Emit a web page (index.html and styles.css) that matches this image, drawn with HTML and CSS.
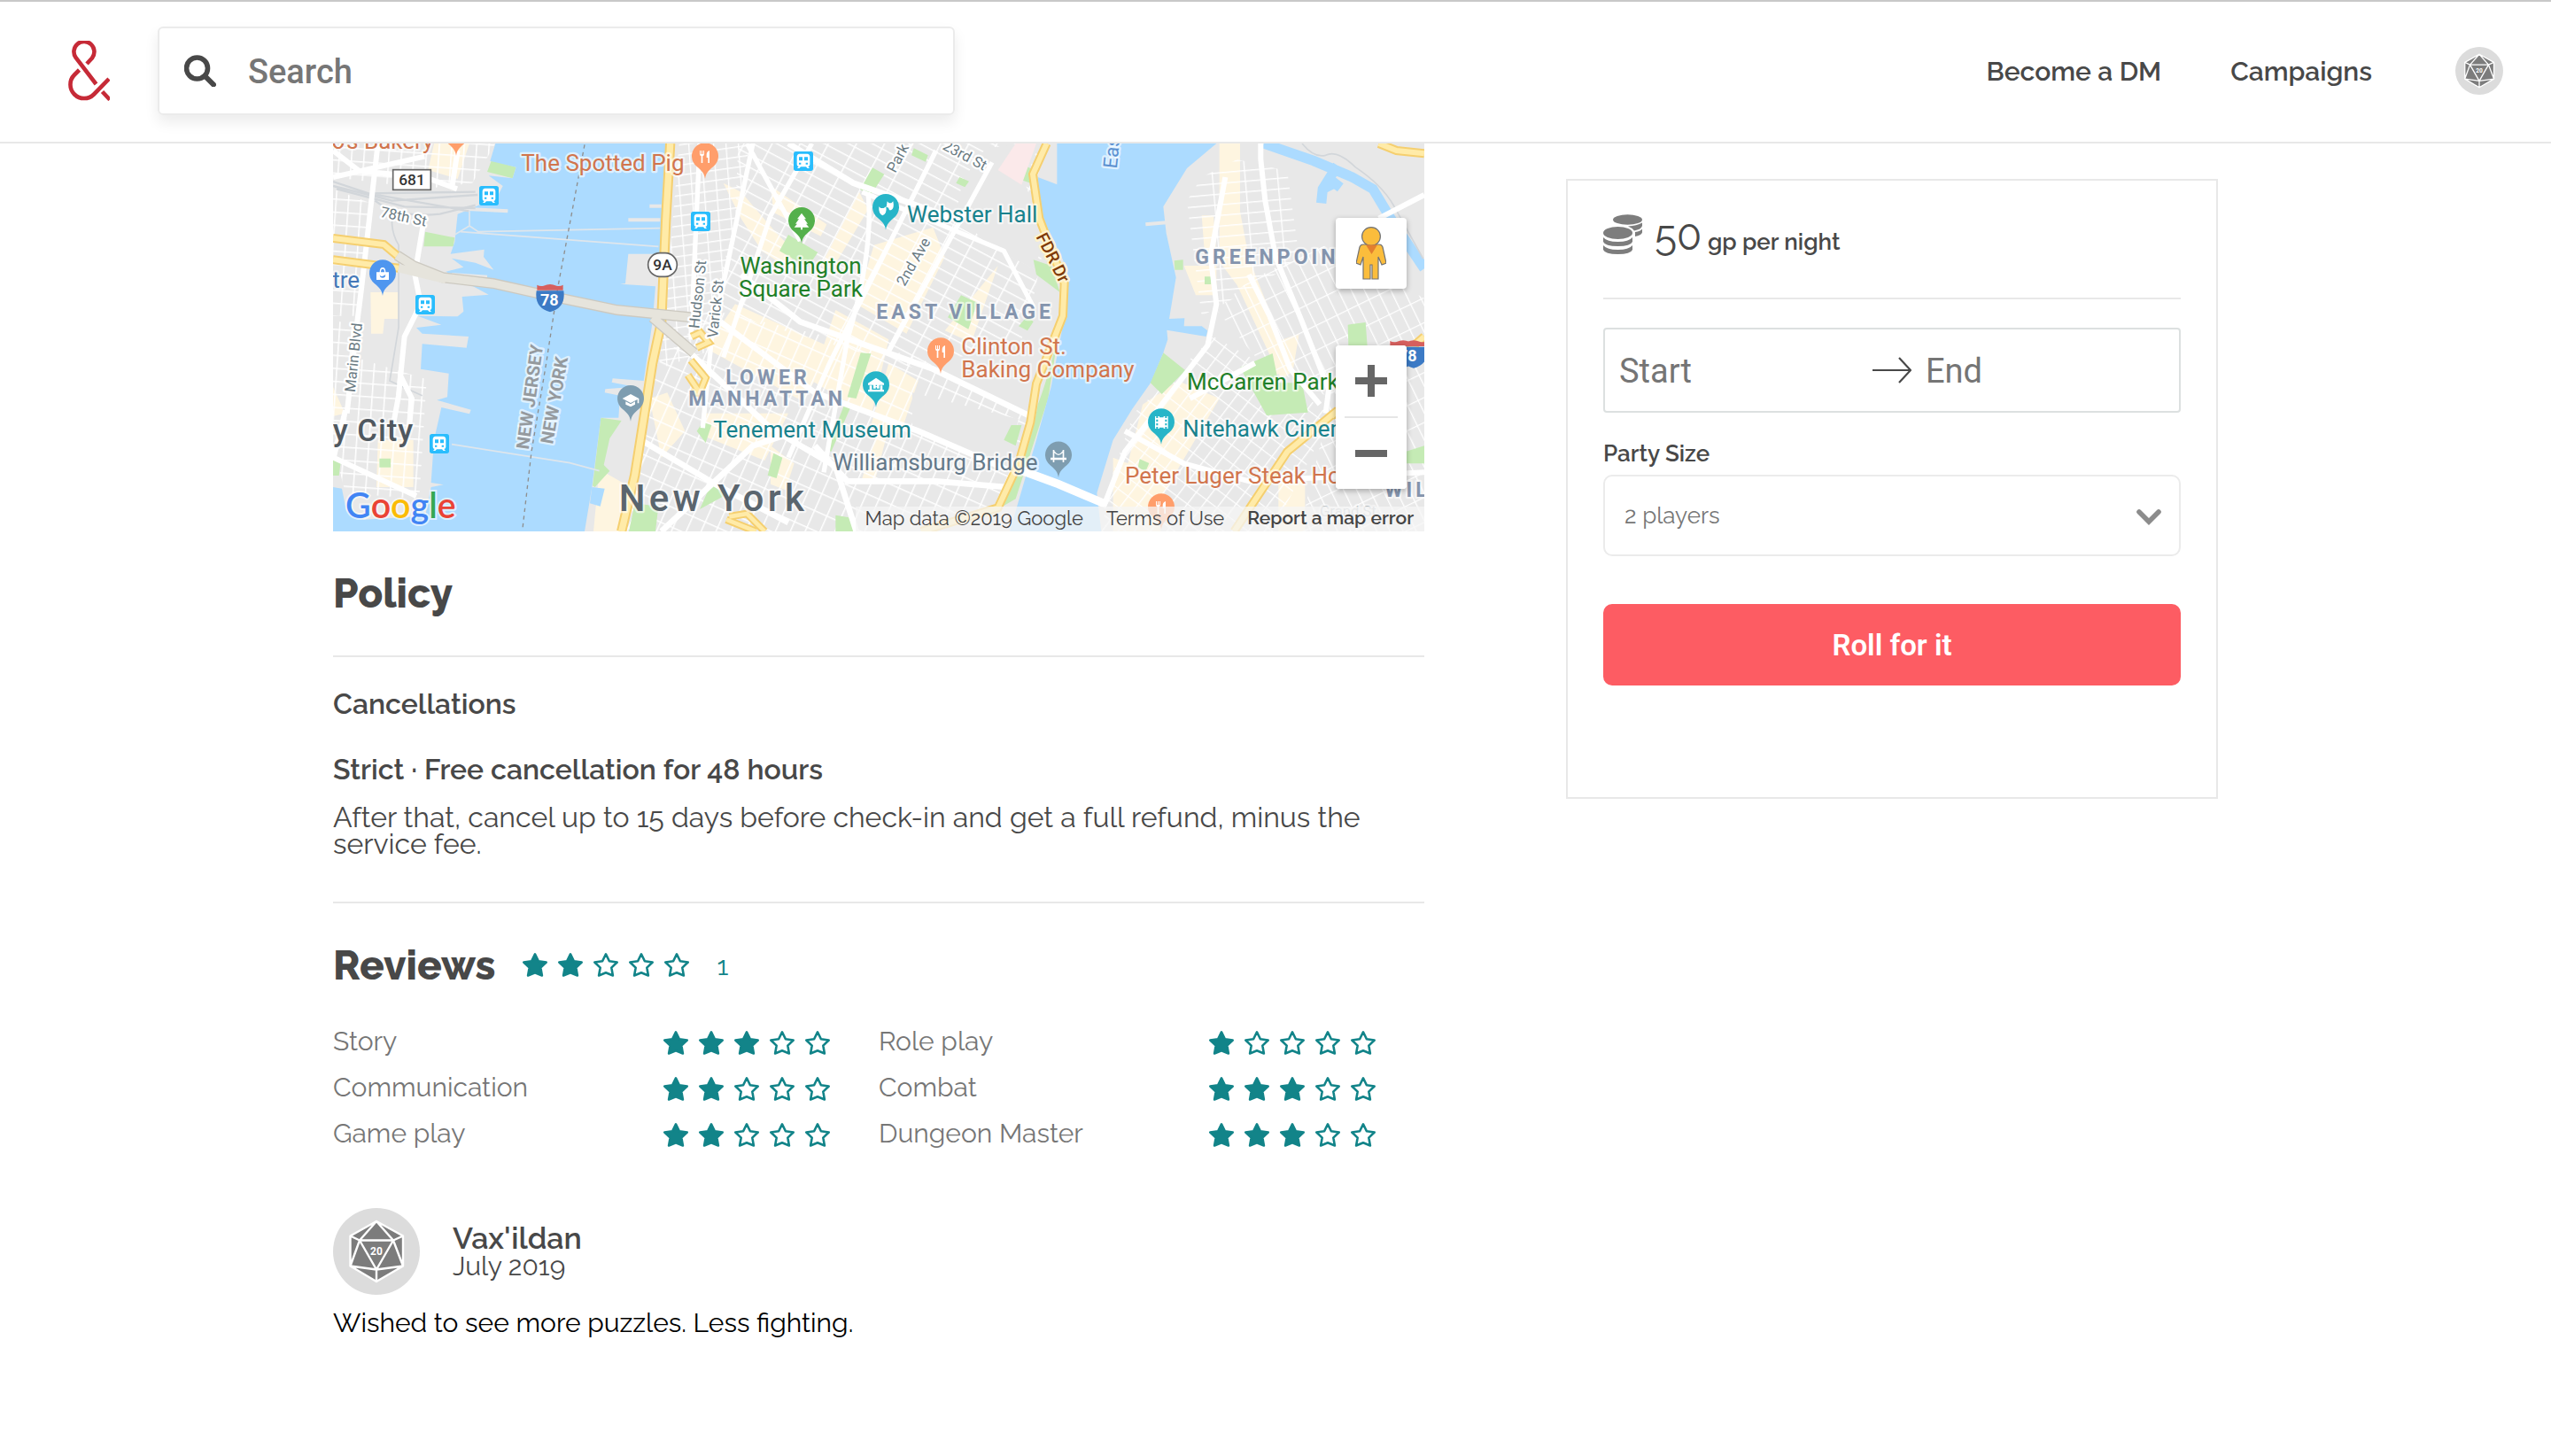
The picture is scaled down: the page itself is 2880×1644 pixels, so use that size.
FILE: index.html
```html
<!DOCTYPE html>
<html lang="en">
<head>
<meta charset="utf-8">
<meta name="viewport" content="width=device-width, initial-scale=1">
<title>Campaign</title>
<link rel="stylesheet" href="styles.css">
</head>
<body>
<svg class="sprite" aria-hidden="true">
  <defs>
    <symbol id="star" viewBox="0 0 30 30"><path d="M15 2.300l3.900 8 8.800 1.200-6.400 6.100 1.600 8.900-7.900-3.300-7.900 3.300 1.600-8.900L2.300 11.500l8.800-1.200z" stroke="currentColor" stroke-width="2.600" stroke-linejoin="round"/></symbol>
    <symbol id="d20" viewBox="0 0 98 98">
      <circle cx="49" cy="49" r="49" fill="#dcdcdc"/>
      <path d="M49 15l30 16.500v34L49 83 19.500 65.500v-34z" fill="#7c7c7c"/>
      <path d="M49 15l30 16.500v34L49 83 19.500 65.500v-34zM49 15L30 36.500h38zM19.500 31.500L30 36.500 19.500 65.500 49 69.500 79 65.500 68 36.500 79 31.500M30 36.500L49 69.500 68 36.500M49 69.500V83" fill="none" stroke="#fff" stroke-width="2.400" stroke-linejoin="round"/>
      <text x="49" y="53" text-anchor="middle" class="d20-number">20</text>
    </symbol>
    <symbol id="pin" viewBox="0 0 100 130" overflow="visible"><path d="M50 124C47 105 40 97 22 82A45 45 0 1 1 78 82C60 97 53 105 50 124z"/></symbol>
    <symbol id="fork" viewBox="0 0 40 46"><path d="M3 2v12q0 6 5 7v23h5V21q5-1 5-7V2h-3v12h-3V2H9v12H6V2zM36 2q-10 3-10 14v10h5v18h5z" fill="#fff"/></symbol>
    <symbol id="transit" viewBox="0 0 66 66">
      <rect width="66" height="66" rx="8" fill="#29bdfd"/>
      <path d="M20 8h26q9 1 9 10v26q0 6-6 7l5 6h-7l-5-5H24l-5 5h-7l5-6q-6-1-6-7V18q0-9 9-10z" fill="#fff"/>
      <path d="M18 19h12v12H18zM36 19h12v12H36zM18 38h7v6h-7zM41 38h7v6h-7z" fill="#29bdfd"/>
    </symbol>
    <symbol id="shield" viewBox="0 0 96 96">
      <path d="M4 3q10 6 22 3 12-5 22-5t22 5q12 3 22-3v18H4z" fill="#d65f5d"/>
      <path d="M2 23h92q8 58-46 72Q-6 81 2 23z" fill="#3c7ac5"/>
    </symbol>
    <pattern id="grid-jersey" width="42" height="44" patternUnits="userSpaceOnUse" patternTransform="rotate(4)"><path d="M0 0H42M0 0V44" stroke="#fff" stroke-width="9"/></pattern>
    <pattern id="grid-west" width="42" height="34" patternUnits="userSpaceOnUse" patternTransform="rotate(-8) skewX(-4)"><path d="M0 0H42M0 0V34" stroke="#fff" stroke-width="8"/></pattern>
    <pattern id="grid-village" width="84" height="38" patternUnits="userSpaceOnUse" patternTransform="rotate(28)"><path d="M0 0H84M0 0V38" stroke="#fff" stroke-width="9"/></pattern>
    <pattern id="grid-lower" width="46" height="62" patternUnits="userSpaceOnUse" patternTransform="rotate(24)"><path d="M0 0H46M0 0V62" stroke="#fff" stroke-width="9"/></pattern>
    <pattern id="grid-green" width="110" height="36" patternUnits="userSpaceOnUse" patternTransform="rotate(-5)"><path d="M0 0H110M0 0V36" stroke="#fff" stroke-width="8"/></pattern>
    <pattern id="grid-east" width="40" height="76" patternUnits="userSpaceOnUse" patternTransform="rotate(-26)"><path d="M0 0H40M0 0V76" stroke="#fff" stroke-width="8"/></pattern>
    <pattern id="grid-burg" width="44" height="50" patternUnits="userSpaceOnUse" patternTransform="rotate(37)"><path d="M0 0H44M0 0V50" stroke="#fff" stroke-width="8"/></pattern>
  </defs>
</svg>

<header class="header">
  <a class="logo" href="#" aria-label="Home">
    <svg viewBox="0 0 46 68"><g fill="none" stroke="#c62a37" stroke-width="4.600"><path d="M21 26L27 19.500A11.500 11.500 0 1 0 8.500 19L31.500 49"/><path d="M12.500 33L7 38.500A15.500 15.500 0 0 0 29 60.500L46 43"/><path d="M38.500 57.500L47 66.500"/></g></svg>
  </a>
  <form class="search" role="search">
    <svg class="search-icon" viewBox="0 0 36 36" aria-hidden="true"><circle cx="14.500" cy="15" r="12" fill="none" stroke="#484848" stroke-width="5.600"/><path d="M24 24.500l9 9" stroke="#484848" stroke-width="6" stroke-linecap="round"/></svg>
    <input class="search-input" type="search" placeholder="Search" aria-label="Search">
  </form>
  <nav class="nav">
    <a href="#">Become a DM</a>
    <a href="#">Campaigns</a>
    <a class="nav-avatar" href="#" aria-label="Profile"><svg viewBox="0 0 98 98"><use href="#d20"/></svg></a>
  </nav>
</header>

<main class="page">
  <div class="details">
    <section class="map" aria-label="Map">
      <svg class="map-canvas" viewBox="18 36 3696 1314">
        <rect x="18" y="36" width="3696" height="1314" fill="#e8e8e8"/>
        <g fill="#fef5e0">
          <path d="M360 36h120l-40 120-100-30zM145 540h95v90h-48l-5 50h-40zM170 1040h120v160H165zM420 1036l40 4-5 16-35-6zM18 860l40 90-40 10z"/>
          <path d="M1340 170l60 30 120 140 60 60-20 60-90-60-70-110zM1500 180l190 130-20 40-160-80zM1800 200l30 60-120 200-40-10zM1850 380l200-60 40 100-130 260-170-100zM2270 450l-90 260-90-40zM1380 580l330 150-100 180-330-180zM1720 600l180 100-60 260-200-120zM1280 950l280 0-80 160-200-80zM1900 780l100 60-60 180-100-30zM1500 1060l80 60-30 90-50-20zM1900 1000l-50 190-40-20 60-180z"/>
          <path d="M1090 900l60-20 60 130-80 90zM920 1140l140 80-60 130H900z"/>
          <path d="M3020 36h70l0 230 30 160 150 380-40 30-150-320-60-80zM2900 450h110v100h-70zM2960 280l40 0 10 130-40 0zM2760 920l120-80 140 60-200 340-110-120zM3180 720l110-40-20 120-60 20zM2660 1100l180 70-20 180h-160zM3220 1180h90v170h-90z"/>
        </g>
        <g fill="none">
          <path d="M18 36H568L490 170 330 190 18 150z" fill="url(#grid-jersey)"/>
          <path d="M18 190L150 240 110 620 18 620z" fill="url(#grid-jersey)"/>
          <path d="M18 640H110L90 760 335 835 310 1240 60 1220 18 1060z" fill="url(#grid-jersey)"/>
          <path d="M1190 36H1430L1290 740 1120 800 1160 400z" fill="url(#grid-west)"/>
          <path d="M1390 36H2400L2430 360 2390 560 2350 700 2000 800 1300 600 1380 300z" fill="url(#grid-village)"/>
          <path d="M1100 800L1300 600 2000 760 2390 970 2300 1270 1900 1350H1000z" fill="url(#grid-lower)"/>
          <path d="M2960 150L3080 90 3250 130 3290 420 3180 500 2960 620 2910 230z" fill="url(#grid-green)"/>
          <path d="M3010 600L3120 500 3370 380 3714 560V1350H3290L3400 900 3160 780z" fill="url(#grid-east)"/>
          <path d="M2730 950L3000 690 3160 780 3400 960 3200 1350H2620L2660 1150z" fill="url(#grid-burg)"/>
        </g>
        <path d="M2150 160l80-110 180-14-50 130 60 170-20 130-170-90-100-110zM1980 880l360 90-50 160-310-120z" fill="#e8e8e8"/>
        <g fill="#c5ebb5">
          <path d="M555 92l83 24-12 38-86-22zM330 335l100 20-5 30h-100zM18 1105l28-4-8 60H18zM175 1103h38v30h-38zM925 965l70 10-40 60-20 90 20 20-50 55-8-5zM1040 1255l80 10-10 85h-90z"/>
          <path d="M1560 345l100 60-35 50-95-55zM1845 118l40 22-45 70-37-18zM1985 52l48 24-8 22-48-22zM2140 150l32 14-14 20-30-14zM2145 550l55 25-30 90-70-40zM1840 748l-50 152-30-5 45-150zM1775 920l-70 160-15-10 60-150zM1510 1085l30 15-20 70-30-10zM1300 1185l60 35-100 55zM2350 990l-20 70-40-20 25-50zM2370 620l20 20-20 30-30-15zM2360 110l40 20-20 40-30-10zM1720 1295l60 10v45h-60zM2390 430l60 20 30 90-80-60zM1250 1010l20-30 30 10-20 60z"/>
          <path d="M2475 680Q2440 830 2405 920 2370 1130 2260 1280L2330 1240 2440 900z"/>
          <path d="M2830 745l75 60-80 80-40-40zM3090 795l110-48 20 100 80 0 20 100-140 10zM2867 433l30-3v34h-28zM2970 487h22v26h-22zM3455 650l60-8 6 80h-64zM2750 1105l32 14-12 28-26-14zM3650 1080l64-20v60h-64z"/>
        </g>
        <path d="M2330 36h70l-50 140-80-50z" fill="#fbe9ea"/>
        <g fill="#acdbff">
          <path d="M568 36L550 95 638 116 626 154 545 145 593 180 575 215 490 255 440 275 430 370 416 410 530 395 528 420 562 464 500 440 420 425 460 455 400 470 545 548 455 555 460 605 440 622 305 620 385 650 300 660 320 680 477 690 470 728 320 715 315 800 410 815 405 895 370 905 485 938 480 952 385 930 360 1040 350 1185 392 1192 350 1200 320 1350H870L895 1200 925 965 985 965 990 890 938 880 940 868 1040 860 962 845 965 832 1070 840 1100 640 1110 520 990 512 1008 510 1018 410 1127 410 1145 36z"/>
          <path d="M18 1200l30 5 15 75 60 30 180-10 20-30 20 80H18zM895 1200l43 5-15 60-35-10z"/>
          <path d="M2470 36V175L2405 150 2415 290 2460 370 2490 430 2510 500 2500 600 2450 860 2400 1040 2310 1350H2620L2605 1220 2660 1040 2725 935 2785 850 2830 745 2845 700 2842 668 2975 690 2980 670 2960 655 2900 655 2902 628 2850 630 2873 490 2840 340 2830 250 2910 120 3010 36z"/>
        </g>
        <path d="M3170 36L3340 95 3470 150 3540 190 3600 290 3714 460M3420 110L3370 190 3365 238M3370 190l40-20 20 15" fill="none" stroke="#acdbff" stroke-width="34"/>
        <path d="M1018 295h108M1090 248h40M410 255l200 10M420 480l120 8M2770 310l70-6" stroke="#e8e8e8" stroke-width="12"/>
        <g fill="none" stroke="#d2d6da" stroke-width="8">
          <path d="M18 165l120 40 340 60M18 180l200 50 290-20M30 190l230 60 240 5M140 205l360-5M160 230q80 60 220 45l120-30" stroke-width="7"/>
          <path d="M220 270q-10 60 20 110v280l-30 180 110 50M3300 36q40 50 80 40 40-20 100 40 90 60 130 130l100 180" stroke-width="5"/>
        </g>
        <g fill="none" stroke="#dfe6ec" stroke-width="5"><path d="M430 345l50-30 30 20 615-12M480 315v-50M450 335l670 50M420 1055L820 1118 920 1145"/></g>
        <g fill="none" stroke="#fff" stroke-width="16">
          <path d="M170 36L115 520 95 680 65 950M18 60l90 70 220 20 110 40M440 60l-20 130M18 150l310-70M325 300l-30 180 20 100-55 110-20 200-20 110M245 820l40 80-10 110M60 940l-40 160 280 130" stroke-width="18"/>
          <path d="M1260 36L1230 700M1440 36L1300 700 1270 1000M1420 36l180 330M1810 200L2290 400 2390 590M2060 60L1700 780 1560 1100M2250 100L1900 740M1830 200Q1850 400 1760 700L1680 1150M1640 36L1500 280 1340 760" stroke-width="16"/>
          <path d="M1400 480L1600 640 2050 800 2380 960M1330 640L1650 880 2000 1010 2300 1140M1200 720L1500 1000 1720 1130 1790 1350M1060 1040L1330 1200 1560 1320M1650 1060L1760 1180H2060L2300 1200M1130 1350L1440 1060 1560 1020M1560 36L1780 170 2150 300" stroke-width="20"/>
          <path d="M3160 36V90L3175 230 3210 420 3300 640 3390 870 3380 950M3040 150L2990 420 3010 580 2980 720 2840 900 2700 1080 2630 1260M3120 480L3190 620 3260 800 3360 920M2700 1010L2900 1120 3120 1180 3714 1150M3714 210L3560 290M3140 780L2920 900" stroke-width="18"/>
        </g>
        <path d="M2340 1140L2475 1190 2640 1260" stroke="#fff" stroke-width="28"/>
        <g fill="none">
          <g stroke="#f5cf6f" stroke-width="34">
            <path d="M1160 36L1145 300 1130 640 1100 780 1040 1160 995 1350"/>
            <path d="M2435 36L2388 140 2410 290 2495 510 2490 620 2400 850 2380 980 2340 1120 2270 1270 2010 1350M3714 70L3620 60 3560 36M3420 940L3250 1080 3190 1170 3070 1350M3400 960L3714 690M18 357L190 378 240 420M18 430L240 458" stroke-width="30"/>
            <path d="M1232 690l30-14 28 34-40 18M1230 770l50 60-20 50-40-60M1230 880l40 0M1360 1300l60-10 60 60M1350 1310l100 40" stroke-width="26"/>
          </g>
          <g stroke="#ffeba8" stroke-width="22">
            <path d="M1160 36L1145 300 1130 640 1100 780 1040 1160 995 1350"/>
            <path d="M2435 36L2388 140 2410 290 2495 510 2490 620 2400 850 2380 980 2340 1120 2270 1270 2010 1350M3714 70L3620 60 3560 36M3420 940L3250 1080 3190 1170 3070 1350M3400 960L3714 690M18 357L190 378 240 420M18 430L240 458" stroke-width="18"/>
            <path d="M1232 690l30-14 28 34-40 18M1230 770l50 60-20 50-40-60M1230 880l40 0M1360 1300l60-10 60 60M1350 1310l100 40" stroke-width="14"/>
          </g>
          <path d="M235 415L290 450 390 490 560 510 740 550 980 600 1230 625M1100 625L1240 745" stroke="#ccc9c0" stroke-width="36"/>
          <path d="M235 415L290 450 390 490 560 510 740 550 980 600 1230 625M1100 625L1240 745M240 458L400 497" stroke="#e6e4dc" stroke-width="28"/>
          <path d="M870 40L780 520 740 780 690 1080 660 1340" stroke="#8f8f8f" stroke-width="4" stroke-dasharray="13 13"/>
        </g>

        <g class="label road">
          <text transform="translate(176 284) rotate(12)">78th St</text>
          <text transform="translate(92 880) rotate(-84)">Marin Blvd</text>
          <text transform="translate(1258 664) rotate(-84)">Hudson St</text>
          <text transform="translate(1320 696) rotate(-84)">Varick St</text>
          <text transform="translate(1922 138) rotate(-62)">Park Ave</text>
          <text transform="translate(2080 54) rotate(28)">23rd St</text>
          <text transform="translate(1954 522) rotate(-60)">2nd Ave</text>
          <text x="3360" y="1300" class="faint">Grand St</text>
        </g>
        <g class="label border-name">
          <text transform="translate(680 1074) rotate(-82)">NEW JERSEY</text>
          <text transform="translate(762 1056) rotate(-80)">NEW YORK</text>
        </g>
        <text class="label fdr" transform="translate(2398 352) rotate(63)">FDR Dr</text>
        <text class="label river" transform="translate(2672 122) rotate(-84)">East River</text>
        <g class="label district">
          <text x="1858" y="631">EAST VILLAGE</text>
          <text x="1348" y="853">LOWER</text>
          <text x="1222" y="924">MANHATTAN</text>
          <text x="2938" y="444">GREENPOINT</text>
          <text x="3580" y="1234">WILLIAMSBURG</text>
        </g>
        <text class="label city" text-anchor="end" x="292" y="1044">Jersey City</text>
        <text class="label metropolis" x="986" y="1280">New York</text>
        <g class="label food">
          <text text-anchor="end" x="358" y="54">Carlo's Bakery</text>
          <text x="655" y="128">The Spotted Pig</text>
          <text x="2146" y="749">Clinton St.</text>
          <text x="2146" y="828">Baking Company</text>
          <text x="2700" y="1187">Peter Luger Steak House</text>
        </g>
        <g class="label park">
          <text x="1602" y="476" text-anchor="middle">Washington</text>
          <text x="1602" y="554" text-anchor="middle">Square Park</text>
          <text x="2910" y="869">McCarren Park</text>
        </g>
        <g class="label culture">
          <text x="1962" y="303">Webster Hall</text>
          <text x="1306" y="1032">Tenement Museum</text>
          <text x="2896" y="1028">Nitehawk Cinema</text>
        </g>
        <text class="label landmark" x="1710" y="1142">Williamsburg Bridge</text>
        <text class="label shop" text-anchor="end" x="108" y="524">Centre</text>

        <g>
          <use href="#pin" x="385" y="-46" width="100" height="130" fill="#ff9e6b"/>
          <use href="#pin" x="1228" y="32" width="100" height="130" fill="#ff9e6b"/><use href="#fork" x="1256" y="58" width="42" height="46"/>
          <use href="#pin" x="2026" y="692" width="100" height="130" fill="#ff9e6b"/><use href="#fork" x="2054" y="718" width="42" height="46"/>
          <use href="#pin" x="2773" y="1220" width="100" height="130" fill="#ff9e6b"/><use href="#fork" x="2801" y="1246" width="42" height="46"/>
          <use href="#pin" x="1555" y="250" width="100" height="130" fill="#54b04b"/>
          <path d="M1605 272l15 20h-6l12 16h-6l10 12h-22v8h-6v-8h-22l10-12h-6l12-16h-6z" fill="#fff"/>
          <use href="#pin" x="1840" y="205" width="100" height="130" fill="#27b5c8"/>
          <path d="M1895 232l6 6h8l6-6q5 24-7 30h-6q-2-12-10-10zM1867 250l6 5h10l8-5q4 24-12 30-14-6-12-30z" fill="#fff"/>
          <use href="#pin" x="1807" y="806" width="100" height="130" fill="#27b5c8"/>
          <path d="M1830 848l27-18 27 18v6h-54zM1835 856h8v14h28v-14h8v14h5v7h-54v-7h5zM1848 853h8v5h4v-5h8v13h-8v-4h-4v4h-8z" fill="#fff"/>
          <use href="#pin" x="2773" y="932" width="100" height="130" fill="#27b5c8"/>
          <path d="M2802 960h4v6h6v-6h5v4h14v-4h5v6h6v-6h4v42h-4v-6h-6v6h-5v-4h-14v4h-5v-6h-6v6h-4zM2806 971v7h6v-7zM2806 984v7h6v-7zM2836 971v7h6v-7zM2836 984v7h6v-7z" fill="#fff" fill-rule="evenodd"/>
          <use href="#pin" x="2425" y="1044" width="100" height="130" fill="#7e9db0"/>
          <path d="M2448 1100h54v8h-8v8h-5v-8h-28v8h-5v-8h-8zM2456 1074h5v26h-5zM2489 1074h5v26h-5zM2461 1078q14 20 28 0v6q-14 16-28 0z" fill="#fff"/>
          <use href="#pin" x="976" y="853" width="100" height="130" fill="#7e9db0"/>
          <path d="M998 900l28-15 28 15v16h-5v-13l-23 12zM1009 910l17 9 15-9v10l-15 8-17-8z" fill="#fff"/>
          <use href="#pin" x="136" y="428" width="100" height="130" fill="#4f96ef"/>
          <path d="M165 472h11q0-16 10-16t10 16h11v26h-42zM180 472h12q0-11-6-11t-6 11zM176 480q4 12 20 0l-2 8q-8 6-16 0z" fill="#fff" fill-rule="evenodd"/>
          <use href="#transit" x="513" y="180" width="66" height="66"/>
          <use href="#transit" x="297" y="549" width="66" height="66"/>
          <use href="#transit" x="345" y="1020" width="66" height="66"/>
          <use href="#transit" x="1230" y="267" width="66" height="66"/>
          <use href="#transit" x="1578" y="63" width="66" height="66"/>
          <use href="#shield" x="705" y="512" width="96" height="96"/><text class="shield-text" x="751" y="586">78</text>
          <use href="#shield" x="3594" y="702" width="96" height="96"/><use href="#shield" x="3630" y="702" width="96" height="96"/><text class="shield-text" x="3658" y="775">78</text>
          <rect x="221" y="125" width="128" height="68" fill="#fff" stroke="#666" stroke-width="5"/><text class="route-text" x="285" y="177">681</text>
          <rect x="1085" y="407" width="98" height="80" rx="40" fill="#fff" stroke="#666" stroke-width="5"/><text class="route-text" x="1134" y="464">9A</text>
        </g>
        <text class="google" x="60" y="1306"><tspan fill="#4285f4">G</tspan><tspan fill="#ea4335">o</tspan><tspan fill="#fbbc05">o</tspan><tspan fill="#4285f4">g</tspan><tspan fill="#34a853">l</tspan><tspan fill="#ea4335">e</tspan></text>
      </svg>
      <button class="map-button pegman" type="button" aria-label="Street View">
        <svg viewBox="0 0 34 60"><g fill="#fbbd3c" stroke="#737373" stroke-width="1.200"><path d="M8 20h18q3 0 4 3l4 18-5 2-4-9v25h-7V43h-2v16H8V34l-3 9-5-2 4-18q1-3 4-3z"/><circle cx="17" cy="11" r="10.400"/></g><path d="M11 20.500h13L17.500 31z" fill="#e37f2e"/></svg>
      </button>
      <div class="map-zoom">
        <button class="map-button" type="button" aria-label="Zoom in"><svg viewBox="0 0 36 36"><path d="M14 0h8v14h14v8H22v14h-8V22H0v-8h14z"/></svg></button>
        <button class="map-button" type="button" aria-label="Zoom out"><svg viewBox="0 0 36 36"><path d="M0 14h36v8H0z"/></svg></button>
      </div>
      <div class="map-legal"><span>Map data ©2019 Google</span><a href="#">Terms of Use</a><a class="report" href="#">Report a map error</a></div>
    </section>

    <section class="policy">
      <h2>Policy</h2>
      <div class="policy-body">
        <h3>Cancellations</h3>
        <h4>Strict · Free cancellation for 48 hours</h4>
        <p>After that, cancel up to 15 days before check-in and get a full refund, minus the service fee.</p>
      </div>
    </section>

    <section class="reviews">
      <div class="reviews-head">
        <h2>Reviews</h2>
        <span class="stars" role="img" aria-label="2 of 5 stars"><svg class="on"><use href="#star"/></svg><svg class="on"><use href="#star"/></svg><svg><use href="#star"/></svg><svg><use href="#star"/></svg><svg><use href="#star"/></svg></span>
        <span class="count">1</span>
      </div>
      <dl class="ratings">
        <div><dt>Story</dt><dd class="stars" aria-label="3 of 5 stars"><svg class="on"><use href="#star"/></svg><svg class="on"><use href="#star"/></svg><svg class="on"><use href="#star"/></svg><svg><use href="#star"/></svg><svg><use href="#star"/></svg></dd></div>
        <div><dt>Role play</dt><dd class="stars" aria-label="1 of 5 stars"><svg class="on"><use href="#star"/></svg><svg><use href="#star"/></svg><svg><use href="#star"/></svg><svg><use href="#star"/></svg><svg><use href="#star"/></svg></dd></div>
        <div><dt>Communication</dt><dd class="stars" aria-label="2 of 5 stars"><svg class="on"><use href="#star"/></svg><svg class="on"><use href="#star"/></svg><svg><use href="#star"/></svg><svg><use href="#star"/></svg><svg><use href="#star"/></svg></dd></div>
        <div><dt>Combat</dt><dd class="stars" aria-label="3 of 5 stars"><svg class="on"><use href="#star"/></svg><svg class="on"><use href="#star"/></svg><svg class="on"><use href="#star"/></svg><svg><use href="#star"/></svg><svg><use href="#star"/></svg></dd></div>
        <div><dt>Game play</dt><dd class="stars" aria-label="2 of 5 stars"><svg class="on"><use href="#star"/></svg><svg class="on"><use href="#star"/></svg><svg><use href="#star"/></svg><svg><use href="#star"/></svg><svg><use href="#star"/></svg></dd></div>
        <div><dt>Dungeon Master</dt><dd class="stars" aria-label="3 of 5 stars"><svg class="on"><use href="#star"/></svg><svg class="on"><use href="#star"/></svg><svg class="on"><use href="#star"/></svg><svg><use href="#star"/></svg><svg><use href="#star"/></svg></dd></div>
      </dl>
      <article class="review">
        <div class="reviewer">
          <svg class="avatar" viewBox="0 0 98 98" aria-hidden="true"><use href="#d20"/></svg>
          <div><div class="name">Vax'ildan</div><div class="date">July 2019</div></div>
        </div>
        <p>Wished to see more puzzles. Less fighting.</p>
      </article>
    </section>
  </div>

  <aside class="booking">
    <form class="card">
      <div class="price">
        <svg class="coins" viewBox="0 0 44 46" aria-hidden="true"><g fill="#7d7d7d"><ellipse cx="27.500" cy="6" rx="16.500" ry="5.700"/><path d="M28 13.500q10-.5 16-4v3.500q-1 4-9 5.500-2-3-7-5zM36 20q6-1 8-3.500v4q-1 3-8 4.500z"/><ellipse cx="16.500" cy="21" rx="16.500" ry="7"/><path d="M0 26q4 5 16.500 5T33 26v5q-2 5-16.500 5T0 31zM0 35q4 5 16.500 5T33 35v5q-2 5-16.500 5T0 40z"/></g></svg>
        <p><span class="amount">50</span> <span class="unit">gp per night</span></p>
      </div>
      <div class="dates">
        <input type="text" placeholder="Start" aria-label="Start date">
        <svg class="arrow" viewBox="0 0 44 30" aria-hidden="true"><path d="M0 15h43M30 1l13 14-13 14" fill="none" stroke="#484848" stroke-width="2.200"/></svg>
        <input type="text" placeholder="End" aria-label="End date">
      </div>
      <label for="party">Party Size</label>
      <div class="select">
        <select id="party"><option>2 players</option></select>
        <svg class="chevron" viewBox="0 0 28 18" aria-hidden="true"><path d="M3 3l11 11L25 3" fill="none" stroke="#8c8c8c" stroke-width="5.600" stroke-linecap="round"/></svg>
      </div>
      <button class="submit" type="submit">Roll for it</button>
    </form>
  </aside>
</main>
</body>
</html>
```
FILE: styles.css
```css
* { box-sizing: border-box; }
body {
  margin: 0;
  background: #fff;
  color: #484848;
  font-family: Raleway, Lato, sans-serif;
  font-size: 30px;
}
h2, h3, h4, p, dl, dd { margin: 0; }
a { color: inherit; text-decoration: none; }
button, input, select { font: inherit; color: inherit; }
.sprite { display: block; width: 0; height: 0; }
.d20-number { font: 700 12px Roboto, sans-serif; fill: #fff; }

/* Header */
.header {
  display: flex;
  align-items: center;
  padding: 28px 54px 30px 76px;
  border-top: 2px solid #c8c8c8;
  border-bottom: 2px solid #e8e8e8;
}
.logo { width: 48px; height: 68px; }
.logo svg { display: block; width: 48px; height: 68px; }
.search {
  display: flex;
  align-items: center;
  gap: 36px;
  flex: 0 1 900px;
  height: 100px;
  margin-left: 54px;
  padding: 0 28px;
  border: 2px solid #ebebeb;
  border-radius: 6px;
  box-shadow: 0 8px 16px rgba(0, 0, 0, .08);
}
.search-icon { flex: none; width: 36px; height: 36px; }
.search-input {
  flex: 1;
  min-width: 0;
  padding: 2px 0 0;
  border: 0;
  outline: 0;
  background: none;
  font: 500 38px/44px Roboto, sans-serif;
}
.search-input::placeholder { color: #767676; opacity: 1; }
.nav {
  display: flex;
  align-items: center;
  gap: 78px;
  margin-left: auto;
  font-size: 30px;
  font-weight: 600;
  white-space: nowrap;
}
.nav-avatar { width: 54px; height: 54px; margin-left: 16px; }
.nav-avatar svg { display: block; width: 54px; height: 54px; }

/* Page */
.page {
  display: grid;
  grid-template-columns: minmax(0, 1232fr) minmax(0, 736fr);
  gap: 160px;
  max-width: 2128px;
  margin: 0 auto;
}

/* Map */
.map { position: relative; overflow: hidden; }
.map-canvas { display: block; width: 100%; height: auto; }
.label { font-family: Roboto, sans-serif; font-size: 78px; paint-order: stroke; stroke: rgba(255, 255, 255, .6); stroke-width: 14px; stroke-linejoin: round; }
.road { font-size: 50px; fill: #6b7b83; stroke: #fff; }
.faint { opacity: .4; }
.border-name { font-size: 60px; font-weight: 700; fill: #959a9e; }
.fdr { font-size: 58px; font-weight: 500; fill: #7f3a08; stroke: #fff3cf; }
.river { font-size: 66px; fill: #5a8fd0; }
.district { font-size: 69px; font-weight: 700; letter-spacing: 12px; fill: #8494ad; }
.city { font-size: 104px; font-weight: 500; letter-spacing: 3px; fill: #50585f; }
.metropolis { font-size: 126px; font-weight: 500; letter-spacing: 13px; fill: #5a656e; }
.food { fill: #d1754d; }
.park { fill: #1f8028; }
.culture { fill: #18828d; }
.landmark { fill: #64798a; }
.shop { fill: #4478b8; }
.shield-text { font: 700 54px Roboto, sans-serif; fill: #fff; text-anchor: middle; }
.route-text { font: 500 52px Roboto, sans-serif; fill: #333; text-anchor: middle; }
.google { font: 600 118px Lato, sans-serif; paint-order: stroke; stroke: rgba(255, 255, 255, .6); stroke-width: 12px; }
.map-button {
  display: flex;
  align-items: center;
  justify-content: center;
  width: 80px;
  height: 80px;
  padding: 0;
  border: 0;
  border-radius: 4px;
  background: #fff;
}
.map-button svg { width: 36px; height: 36px; fill: #666; }
.pegman { position: absolute; top: 84px; right: 20px; box-shadow: 0 2px 6px rgba(0, 0, 0, .3); }
.map-button.pegman svg { width: 34px; height: 60px; }
.map-zoom {
  position: absolute;
  right: 20px;
  bottom: 48px;
  border-radius: 4px;
  background: #fff;
  box-shadow: 0 2px 6px rgba(0, 0, 0, .3);
}
.map-zoom .map-button + .map-button::before {
  content: "";
  position: absolute;
  top: 80px;
  left: 10px;
  right: 10px;
  height: 2px;
  background: #e6e6e6;
}
.map-zoom .map-button + .map-button { margin-top: 2px; }
.map-legal {
  position: absolute;
  right: 0;
  bottom: 0;
  display: flex;
  gap: 26px;
  padding: 0 12px 2px 10px;
  background: rgba(245, 245, 245, .75);
  font-size: 22px;
  line-height: 26px;
  color: #444;
  white-space: nowrap;
}
.report { font-size: 21px; font-weight: 600; }

/* Policy */
h2 { font-size: 46px; line-height: 56px; font-weight: 800; }
.policy h2 { padding: 42px 0; border-bottom: 2px solid #e8e8e8; }
.policy-body {
  padding: 34px 0 50px;
  border-bottom: 2px solid #e8e8e8;
  font-size: 32px;
  line-height: 30px;
}
h3, h4 { font-size: 32px; line-height: 38px; font-weight: 600; }
h4 { margin-top: 36px; }
.policy-body p { margin-top: 20px; }

/* Reviews */
.reviews-head { display: flex; align-items: center; gap: 30px; padding-top: 42px; }
.stars { display: flex; gap: 10px; color: #128489; }
.stars svg { width: 30px; height: 30px; fill: none; }
.stars .on { fill: currentColor; }
.count { color: #128489; font-size: 30px; }
.ratings {
  display: grid;
  grid-template-columns: 1fr 1fr;
  margin-top: 34px;
  color: #767676;
  line-height: 48px;
}
.ratings div { display: flex; align-items: center; justify-content: space-between; height: 52px; padding-right: 54px; }
.ratings dt { margin-bottom: 4px; }
.review { margin-top: 56px; }
.reviewer { display: flex; align-items: center; gap: 37px; }
.avatar { width: 98px; height: 98px; }
.name { font-size: 34px; line-height: 34px; font-weight: 600; }
.date { line-height: 30px; }
.review p { margin-top: 14px; color: #000; line-height: 36px; }

/* Booking card */
.card {
  margin-top: 40px;
  padding: 38px 40px 126px;
  border: 2px solid #e8e8e8;
}
.price {
  display: flex;
  align-items: flex-start;
  gap: 14px;
  height: 96px;
  border-bottom: 2px solid #e8e8e8;
}
.coins { width: 44px; height: 46px; }
.price p { font-size: 26px; line-height: 48px; }
.amount { font-size: 46px; }
.unit { font-weight: 600; }
.dates {
  display: flex;
  align-items: center;
  height: 96px;
  margin-top: 32px;
  border: 2px solid #dce0e0;
  border-radius: 4px;
}
.dates input {
  flex: 1;
  min-width: 0;
  padding: 2px 16px 0;
  border: 0;
  outline: 0;
  background: none;
  font: 400 38px/48px Roboto, sans-serif;
}
.dates input::placeholder { color: #757575; opacity: 1; }
.arrow { width: 44px; height: 30px; }
.card label { display: block; margin: 30px 0 8px; font-size: 26px; line-height: 32px; font-weight: 600; }
.select { display: grid; align-items: center; }
.select > * { grid-area: 1 / 1; }
.select select {
  width: 100%;
  height: 92px;
  padding: 0 22px;
  border: 2px solid #ebebeb;
  border-radius: 10px;
  background: #fff;
  color: #767676;
  font-size: 26px;
  appearance: none;
}
.chevron { justify-self: end; width: 28px; height: 18px; margin: 4px 22px 0 0; pointer-events: none; }
.submit {
  width: 100%;
  height: 92px;
  margin-top: 54px;
  border: 0;
  border-radius: 10px;
  background: #fd5c63;
  color: #fff;
  font: 600 33px Roboto, sans-serif;
}
```
